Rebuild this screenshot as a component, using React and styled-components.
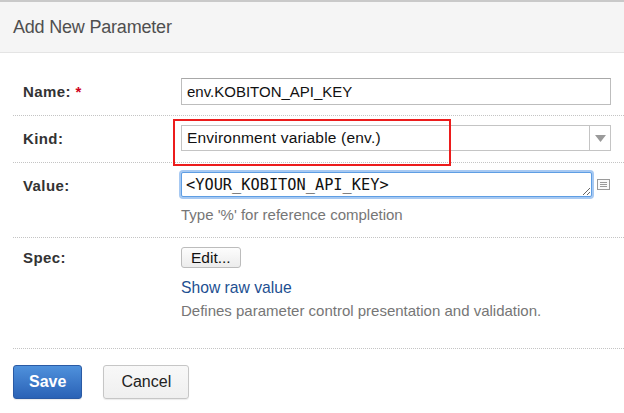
import styled, { createGlobalStyle } from "styled-components";

const GlobalStyle = createGlobalStyle`
  html, body {
    margin: 0;
    padding: 0;
    background: #ffffff;
  }
  body {
    font-family: "Liberation Sans", Arial, sans-serif;
    color: #333333;
  }
`;

export default function App() {
  return (
    <>
      <GlobalStyle />
      <Dialog>
        <Header>
          <Title>Add New Parameter</Title>
        </Header>
        <Form>
          <Row>
            <Label>
              Name: <Required>*</Required>
            </Label>
            <Field>
              <TextInput defaultValue="env.KOBITON_API_KEY" />
            </Field>
          </Row>
          <Row>
            <Label>Kind:</Label>
            <Field>
              <Select>
                <SelectValue>Environment variable (env.)</SelectValue>
                <SelectArrow>
                  <svg width="11" height="7" viewBox="0 0 11 7">
                    <path d="M0 0 H11 L5.5 7 Z" fill="#9a9a9a" />
                  </svg>
                </SelectArrow>
              </Select>
              <Highlight />
            </Field>
          </Row>
          <Row>
            <Label>Value:</Label>
            <Field>
              <ValueLine>
                <ValueArea defaultValue="<YOUR_KOBITON_API_KEY>" />
                <svg width="13" height="11" viewBox="0 0 13 11">
                  <rect x="0.5" y="0.5" width="12" height="10" fill="#fafafa" stroke="#9a9a9a" />
                  <path d="M3 3.5 H10 M3 5.5 H10 M3 7.5 H10" stroke="#9a9a9a" />
                </svg>
              </ValueLine>
              <Hint top={9} bottom={4}>
                Type '%' for reference completion
              </Hint>
            </Field>
          </Row>
          <Row>
            <Label lh={21}>Spec:</Label>
            <Field>
              <SmallButton>Edit...</SmallButton>
              <LinkText href="#">Show raw value</LinkText>
              <Hint top={5} bottom={19}>
                Defines parameter control presentation and validation.
              </Hint>
            </Field>
          </Row>
          <Actions>
            <Button variant="primary">Save</Button>
            <Button>Cancel</Button>
          </Actions>
        </Form>
      </Dialog>
    </>
  );
}

const Dialog = styled.div`
  width: 624px;
  height: 413px;
  overflow: hidden;
  border-top: 2px solid #c9c9c9;
  box-sizing: border-box;
`;

const Header = styled.div`
  height: 50px;
  background: #f5f5f5;
  border-bottom: 1px solid #e4e4e4;
  padding-left: 13px;
  display: flex;
  align-items: center;
`;

const Title = styled.h1`
  margin: 0;
  font-size: 18px;
  font-weight: 400;
  color: #4f4f4f;
  letter-spacing: -0.2px;
`;

const Form = styled.div`
  padding: 16px 0 0 13px;
`;

const Row = styled.div`
  display: grid;
  grid-template-columns: 158px 1fr;
  padding: 9px 13px 10px 10px;
  border-bottom: 1px dotted #c4c4c4;
`;

const Label = styled.div`
  font-size: 15px;
  font-weight: 700;
  letter-spacing: 0.4px;
  color: #333333;
  line-height: ${(p) => p.lh || 27}px;
`;

const Required = styled.span`
  color: #d0021b;
`;

const Field = styled.div`
  position: relative;
  display: flex;
  flex-direction: column;
  align-items: flex-start;
`;

const TextInput = styled.input`
  width: 100%;
  height: 27px;
  box-sizing: border-box;
  border: 1px solid #bdbdbd;
  border-top-color: #a8a8a8;
  padding: 0 5px;
  font-family: "Liberation Sans", Arial, sans-serif;
  font-size: 15px;
  color: #111111;
  outline: none;
`;

const Select = styled.div`
  width: 100%;
  height: 26px;
  box-sizing: border-box;
  border: 1px solid #c4c4c4;
  display: flex;
  align-items: stretch;
`;

const SelectValue = styled.div`
  flex: 1;
  display: flex;
  align-items: center;
  padding-left: 5px;
  font-size: 15.5px;
  letter-spacing: 0.2px;
  color: #111111;
`;

const SelectArrow = styled.div`
  width: 20px;
  border-left: 1px solid #c4c4c4;
  display: flex;
  align-items: center;
  justify-content: center;
`;

const Highlight = styled.div`
  position: absolute;
  left: -8px;
  top: -6px;
  width: 278px;
  height: 47px;
  box-sizing: border-box;
  border: 2px solid #ec1c1c;
  pointer-events: none;
`;

const ValueLine = styled.div`
  width: 100%;
  display: flex;
  align-items: center;
  gap: 5px;
`;

const ValueArea = styled.textarea`
  width: 411px;
  height: 25px;
  box-sizing: border-box;
  border: 1px solid #5e9ee4;
  box-shadow: 0 0 0 2px #a7c9f2;
  border-radius: 2px;
  padding: 2px 4px 0;
  font-family: "DejaVu Sans Mono", "Liberation Mono", monospace;
  font-size: 15.3px;
  line-height: 20px;
  color: #111111;
  outline: none;
  overflow: hidden;
  resize: both;
  white-space: nowrap;
`;

const Hint = styled.div`
  font-size: 15px;
  color: #767676;
  line-height: 17px;
  margin-top: ${(p) => p.top}px;
  margin-bottom: ${(p) => p.bottom}px;
`;

const SmallButton = styled.button`
  height: 21px;
  padding: 0 9px;
  font-family: "Liberation Sans", Arial, sans-serif;
  font-size: 15.5px;
  color: #111111;
  background: linear-gradient(#fdfdfd, #ececec);
  border: 1px solid #bcbcbc;
  border-radius: 3px;
  margin-bottom: 11px;
`;

const LinkText = styled.a`
  font-size: 15.7px;
  color: #1d4f91;
  text-decoration: none;
  line-height: 18px;
`;

const Actions = styled.div`
  display: flex;
  gap: 21px;
  padding-top: 16px;
`;

const Button = styled.button`
  height: 34px;
  box-sizing: border-box;
  padding: 0 ${(p) => (p.variant === "primary" ? "15px" : "17px")};
  font-family: "Liberation Sans", Arial, sans-serif;
  font-size: 16px;
  font-weight: ${(p) => (p.variant === "primary" ? 700 : 400)};
  color: ${(p) => (p.variant === "primary" ? "#ffffff" : "#222222")};
  background: ${(p) =>
    p.variant === "primary"
      ? "linear-gradient(#4f91dc, #2a62b6)"
      : "linear-gradient(#f8f8f8, #efefef)"};
  border: 1px solid ${(p) => (p.variant === "primary" ? "#2a5aa4" : "#c6c6c6")};
  border-radius: 3px;
  box-shadow: 0 1px 1px rgba(0, 0, 0, 0.08);
`;
